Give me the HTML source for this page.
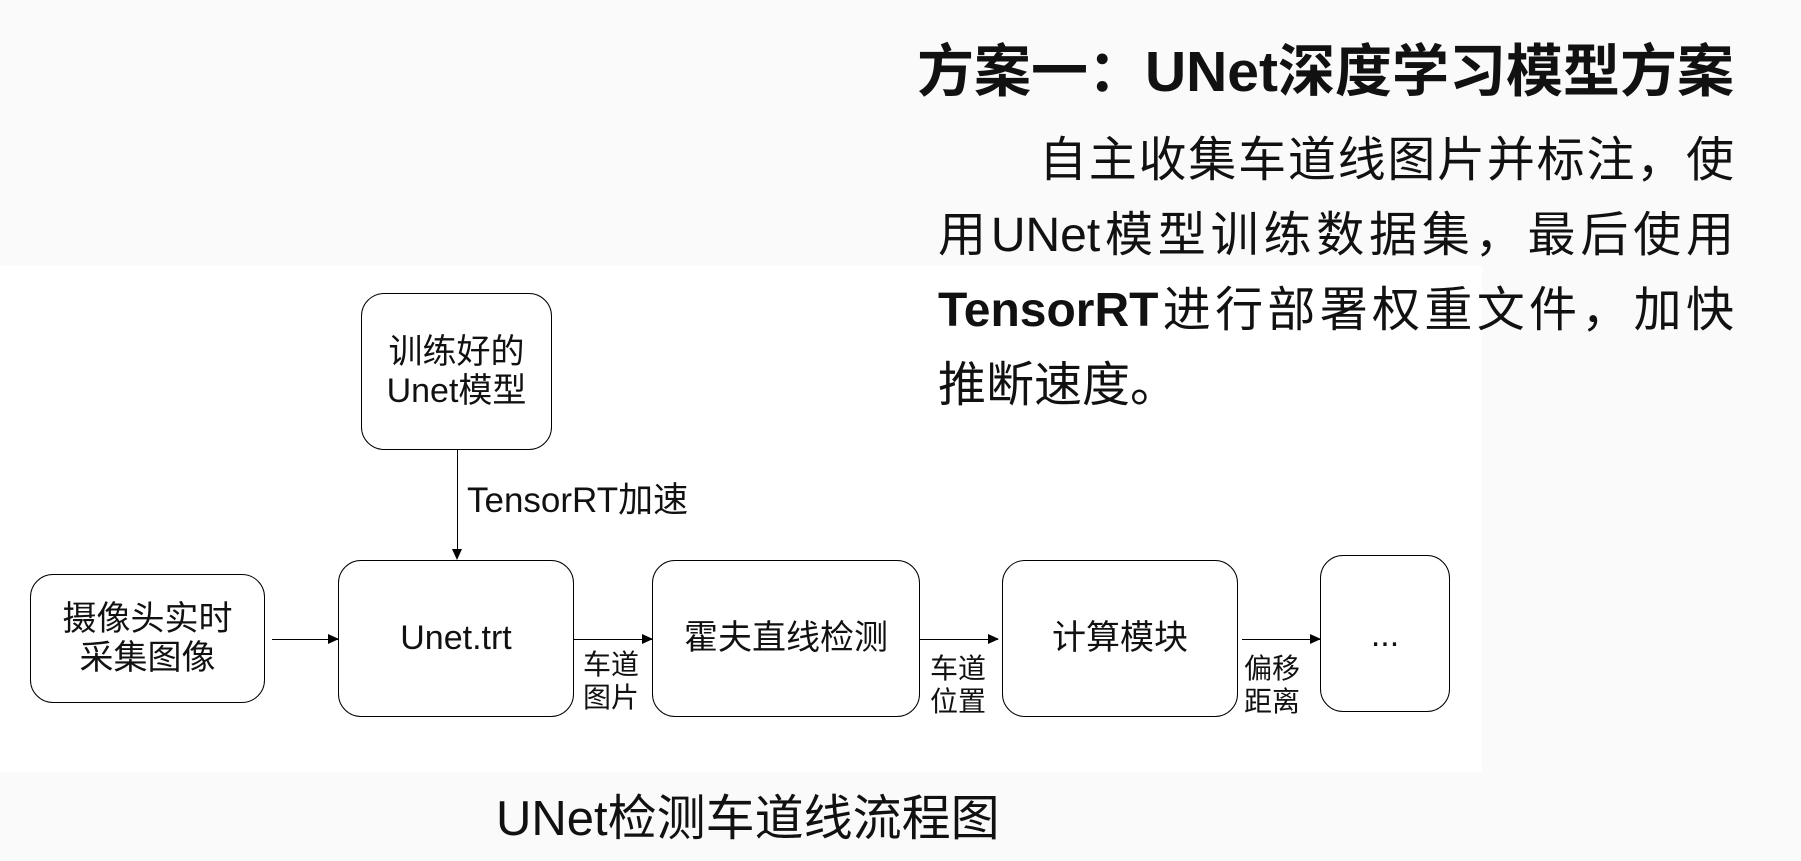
<!DOCTYPE html>
<html><head><meta charset="utf-8"><style>
html,body{margin:0;padding:0}
body{width:1801px;height:861px;background:#fafafa;position:relative;overflow:hidden;font-family:"Liberation Sans","Noto Sans CJK SC",sans-serif;color:#111}
.abs{position:absolute}
.white{left:0;top:266px;width:1482px;height:506px;background:#fff}
.title{right:67px;top:26px;font-size:57px;font-weight:bold;white-space:nowrap}
.para{left:938px;top:123px;width:796px;font-size:48px;line-height:75px;text-align:justify;text-align-last:left;text-indent:101px}
.box{position:absolute;border:1.6px solid #000;border-radius:23px;box-sizing:border-box;display:flex;align-items:center;justify-content:center;text-align:center;font-size:34px;line-height:39px;background:#fff}
.h{position:absolute;height:1.4px;background:#000}
.h:after{content:"";position:absolute;right:-1px;top:-5px;border-left:11px solid #000;border-top:5.5px solid transparent;border-bottom:5.5px solid transparent}
.lbl{position:absolute;font-size:28px;line-height:33px}
</style></head><body>
<div class="abs white"></div>
<div class="abs title">方案一：UNet深度学习模型方案</div>
<div class="abs para">自主收集车道线图片并标注，使用UNet模型训练数据集，最后使用<b>TensorRT</b>进行部署权重文件，加快推断速度。</div>

<div class="box" style="left:361px;top:293px;width:191px;height:157px">训练好的<br>Unet模型</div>
<div class="abs" style="left:457px;top:450px;width:1.4px;height:100px;background:#000"></div>
<div class="abs" style="left:452px;top:549px;border-top:11px solid #000;border-left:5.5px solid transparent;border-right:5.5px solid transparent"></div>
<div class="abs" style="left:467px;top:481px;font-size:35px;line-height:40px">TensorRT加速</div>

<div class="box" style="left:30px;top:574px;width:235px;height:129px">摄像头实时<br>采集图像</div>
<div class="box" style="left:338px;top:560px;width:236px;height:157px">Unet.trt</div>
<div class="box" style="left:652px;top:560px;width:268px;height:157px">霍夫直线检测</div>
<div class="box" style="left:1002px;top:560px;width:236px;height:157px">计算模块</div>
<div class="box" style="left:1320px;top:555px;width:130px;height:157px;align-items:flex-start;padding-top:60px">...</div>

<div class="h" style="left:272px;top:639px;width:66px"></div>
<div class="h" style="left:574px;top:639px;width:78px"></div>
<div class="h" style="left:920px;top:639px;width:78px"></div>
<div class="h" style="left:1242px;top:639px;width:78px"></div>

<div class="lbl" style="left:583px;top:648px">车道<br>图片</div>
<div class="lbl" style="left:930px;top:652px">车道<br>位置</div>
<div class="lbl" style="left:1244px;top:652px">偏移<br>距离</div>

<div class="abs" style="left:496px;top:789px;font-size:49px;line-height:60px;white-space:nowrap">UNet检测车道线流程图</div>
</body></html>
